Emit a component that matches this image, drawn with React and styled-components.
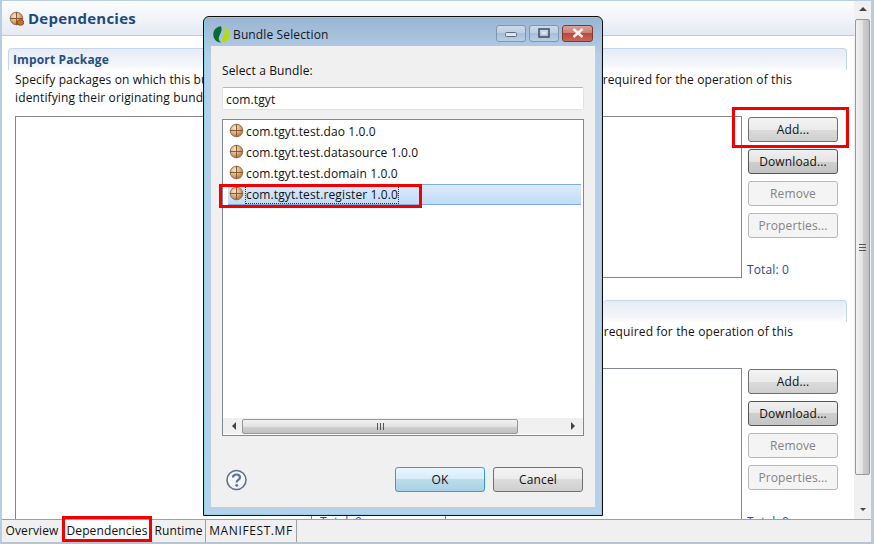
import React from "react";
import styled, { createGlobalStyle } from "styled-components";

const GlobalStyle = createGlobalStyle`
  html, body {
    margin: 0;
    padding: 0;
    background: #fff;
  }
  body {
    font-family: "Open Sans", "Noto Sans", sans-serif;
    font-size: 12px;
    letter-spacing: 0.13px;
    color: #111;
  }
`;

function PackageIcon({ badge }) {
  const id = badge ? "pkgB" : "pkgA";
  return (
    <svg width="15" height="15" viewBox="0 0 15 15" style={{ flex: "none", marginTop: badge ? 0 : -2 }}>
      <defs>
        <radialGradient id={id} cx="0.38" cy="0.32" r="0.75">
          <stop offset="0" stopColor="#f8e6d0" />
          <stop offset="0.55" stopColor="#d9aa7c" />
          <stop offset="1" stopColor="#a06a3a" />
        </radialGradient>
      </defs>
      <circle cx="7.5" cy="7.5" r="6.3" fill={`url(#${id})`} stroke="#96765a" />
      <path d="M7.5 1v13M1 7.5h13" stroke="#8a5a32" strokeWidth="1" />
      {badge && <ellipse cx="11.5" cy="11.5" rx="3.4" ry="2.8" fill="#c8702a" stroke="#7a4218" strokeWidth="0.8" />}
    </svg>
  );
}

function LeafLogo() {
  return (
    <svg width="17" height="17" viewBox="0 0 17 17">
      <path d="M8 .3C3 .8 .3 4.200 .3 8.500s2.700 7.500 7.700 8.200C5.800 14.500 5 12.500 6.300 10 7.800 7 9.500 4 8 .3z" fill="#0b6a32" />
      <path d="M9.500 16.500c4.500-.7 7.200-4 7.200-8S14 1.200 10.200 .5c1.800 2.200 2.600 4.500 1.300 7-1.500 3-3.300 5.500-2 9z" fill="#b4dc0c" />
    </svg>
  );
}

function HelpIcon() {
  return (
    <svg width="21" height="22" viewBox="0 0 21 22">
      <circle cx="10.500" cy="11" r="9.500" fill="#f4f6fa" stroke="#5f7191" strokeWidth="1.600" />
      <path d="M7 8.500c0-2 1.600-3 3.500-3s3.500 1 3.500 2.900c0 2.600-3.300 2.400-3.300 5" fill="none" stroke="#5f7191" strokeWidth="2.200" />
      <circle cx="10.700" cy="16.300" r="1.400" fill="#5f7191" />
    </svg>
  );
}

const Arrow = ({ dir }) => {
  const d = {
    up: "M0 5L4 1L8 5Z",
    down: "M1 2L4 5L7 2Z",
    left: "M5 0L1 4L5 8Z",
    right: "M2 0L6 4L2 8Z",
  }[dir];
  return (
    <svg width="8" height="8" viewBox="0 0 8 8">
      <path d={d} fill="#444" />
    </svg>
  );
};

const Screen = styled.div`
  position: relative;
  width: 875px;
  height: 545px;
  overflow: hidden;
  box-sizing: border-box;
  display: flex;
  flex-direction: column;
  background: #fff;
  padding: 0 1px 1px 0;
`;

const Frame = styled.div`
  flex: 1;
  min-height: 0;
  display: flex;
  flex-direction: column;
  box-sizing: border-box;
  border: solid #b9cde2;
  border-width: 1px 3px 3px 2px;
  border-bottom-color: #b8c4d2;
`;

const Workspace = styled.div`
  height: 518px;
  flex: none;
  display: flex;
`;

const Form = styled.div`
  flex: 1;
  min-width: 0;
  overflow: hidden;
  display: flex;
  flex-direction: column;
`;

const FormHeader = styled.div`
  flex: none;
  height: 34px;
  display: flex;
  align-items: center;
  gap: 4px;
  padding-left: 7px;
  background: linear-gradient(#fdfdfe, #e5eaf3);
  border-bottom: 1px solid #b9cde2;
  h1 {
    margin: 0;
    font-size: 15px;
    font-weight: 700;
    letter-spacing: 0.25px;
    color: #214a7c;
  }
`;

const Section = styled.section`
  flex: none;
  margin: 12px 7px 0 6px;
`;

const SectionHead = styled.div`
  height: 22px;
  box-sizing: border-box;
  padding: 2px 0 0 4px;
  line-height: 18px;
  font-size: 12px;
  font-weight: 700;
  color: #274f80;
  border: 1px solid #c5d6e8;
  border-bottom: 0;
  border-radius: 4px 4px 0 0;
  background: linear-gradient(#e6ebf5, #f4f6fb 80%, #fff);
`;

const Description = styled.div`
  padding: 1px 0 0 7px;
  width: 777px;
  line-height: 18px;
  white-space: nowrap;
`;

const SplitLine = styled.div`
  display: flex;
  justify-content: space-between;
`;

const Columns = styled.div`
  display: flex;
  margin-top: 9px;
  margin-left: 7px;
`;

const LeftTable = styled.div`
  width: 588px;
  height: 420px;
  box-sizing: border-box;
  border-left: 1px solid #828790;
  border-top: 1px solid #828790;
  padding: 396px 0 0 295px;
`;

const HiddenTotalCell = styled.div`
  width: 125px;
  height: 18px;
  padding-left: 8px;
  border-left: 1px solid #828790;
  border-right: 1px solid #828790;
`;

const RightColumn = styled.div`
  width: 244px;
  flex: none;
`;

const TableRow = styled.div`
  display: flex;
  height: 162px;
`;

const TableEnd = styled.div`
  width: 139px;
  flex: none;
  box-sizing: border-box;
  border: solid #828790;
  border-width: 1px 1px ${(p) => (p.$open ? 0 : "1px")} 0;
  height: ${(p) => (p.$open ? "200px" : "162px")};
`;

const ButtonColumn = styled.div`
  width: 90px;
  margin-left: 6px;
  padding-top: 1px;
  display: flex;
  flex-direction: column;
  align-items: flex-end;
  gap: 7px;
`;

const PushButton = styled.div`
  width: 90px;
  height: 25px;
  flex: none;
  box-sizing: border-box;
  border-radius: 3px;
  border: 1px solid ${(p) => (p.$disabled ? "#b5b8ba" : p.$focus ? "#2f9fdc" : p.$strong ? "#555" : "#707070")};
  display: flex;
  align-items: center;
  justify-content: center;
  color: ${(p) => (p.$disabled ? "#838383" : "#111")};
  background: ${(p) =>
    p.$disabled
      ? "#f4f4f4"
      : p.$focus
      ? "linear-gradient(#e9f6fd 0, #d6ecf8 50%, #bcdcec 50%, #a9d0e6 100%)"
      : p.$strong
      ? "linear-gradient(#f0f0f0 0, #e4e4e4 50%, #cfcfcf 50%, #c4c4c4 100%)"
      : "linear-gradient(#f3f3f3 0, #ebebeb 50%, #dcdcdc 50%, #cfcfcf 100%)"};
`;

const TotalLabel = styled.div`
  line-height: 18px;
  color: #2e4a8c;
  white-space: nowrap;
`;

const TotalSlot = styled(TotalLabel)`
  margin-top: auto;
  margin-bottom: -1px;
  align-self: flex-start;
  margin-left: -1px;
`;

const SecondSection = styled.div`
  margin-top: 22px;
`;

const SectionTail = styled(SectionHead)`
  border-left: 0;
  padding: 0;
`;

const TailText = styled.div`
  line-height: 18px;
  height: 36px;
  padding-top: 1px;
  width: 190px;
  white-space: nowrap;
  display: flex;
  justify-content: flex-end;
  margin-bottom: 9px;
`;

const ScrollColumn = styled.div`
  width: 17px;
  flex: none;
  display: flex;
  flex-direction: column;
  background: #f0f0f0;
  box-sizing: border-box;
`;

const ScrollArrow = styled.div`
  height: 18px;
  display: flex;
  align-items: center;
  justify-content: center;
  flex: none;
`;

const VThumb = styled.div`
  height: 456px;
  flex: none;
  margin: 0 1px;
  box-sizing: border-box;
  border: 1px solid #979797;
  border-radius: 2px;
  background: linear-gradient(90deg, #f2f2f2, #e2e2e2 50%, #cfcfcf 55%, #c0c0c0);
  display: flex;
  align-items: center;
  justify-content: center;
  span {
    width: 7px;
    height: 7px;
    background: repeating-linear-gradient(#555 0 1px, transparent 1px 3px);
  }
`;

const ScrollGap = styled.div`
  flex: 1;
`;

const TabBar = styled.div`
  flex: none;
  height: 23px;
  box-sizing: border-box;
  display: flex;
  background: #f0f0f0;
  border-top: 1px solid #a0a0a0;
`;

const Tab = styled.div`
  width: ${(p) => p.$w}px;
  box-sizing: border-box;
  flex: none;
  display: flex;
  align-items: center;
  justify-content: center;
  padding-bottom: 2px;
  letter-spacing: ${(p) => p.$track || 0.13}px;
  border-right: ${(p) => (p.$edge ? "1px solid #a0a0a0" : "0")};
  background: ${(p) => (p.$active ? "linear-gradient(#fff, #f4f4f4)" : "transparent")};
`;

const Dialog = styled.div`
  position: absolute;
  left: 203px;
  top: 16px;
  width: 400px;
  height: 500px;
  box-sizing: border-box;
  border: 1px solid #0c0c0c;
  border-radius: 6px 6px 0 0;
  box-shadow: inset 0 0 0 1px #8fd0ea;
  background: linear-gradient(#9ab5d2 0, #b6cfe8 40px, #b7d1ea 100%);
  padding: 0 7px 8px;
  display: flex;
  flex-direction: column;
`;

const TitleBar = styled.div`
  height: 29px;
  flex: none;
  display: flex;
  align-items: center;
  gap: 3px;
  padding: 6px 0 0 2px;
  box-sizing: border-box;
`;

const TitleText = styled.div`
  flex: 1;
  color: #101820;
`;

const WindowButtons = styled.div`
  display: flex;
  gap: 3px;
  margin: -3px 2px 0 0;
`;

const WindowButton = styled.div`
  width: ${(p) => (p.$close ? 31 : 30)}px;
  height: 17px;
  box-sizing: border-box;
  border-radius: 3px;
  display: flex;
  align-items: center;
  justify-content: center;
  border: 1px solid ${(p) => (p.$close ? "#7d3a35" : "#8096b0")};
  background: ${(p) =>
    p.$close
      ? "linear-gradient(#d8a196, #cf8072 45%, #b9493a 50%, #c8685a)"
      : "linear-gradient(#cbdaea, #bccfe3 45%, #a8bfd8 50%, #b8cee5)"};
`;

const Client = styled.div`
  flex: 1;
  min-height: 0;
  background: #f0f0f0;
  padding: 16px 11px 0;
  display: flex;
  flex-direction: column;
`;

const FieldLabel = styled.div`
  line-height: 18px;
  flex: none;
`;

const FilterInput = styled.div`
  margin-top: 7px;
  height: 23px;
  flex: none;
  box-sizing: border-box;
  border: 1px solid #e3e3e3;
  border-top-color: #b5b5b5;
  border-radius: 2px;
  background: #fff;
  padding-left: 3px;
  line-height: 23px;
`;

const BundleList = styled.div`
  margin-top: 9px;
  height: 317px;
  flex: none;
  box-sizing: border-box;
  border: 1px solid #828790;
  background: #fff;
  padding-top: 1px;
  display: flex;
  flex-direction: column;
`;

const BundleRow = styled.div`
  height: 21px;
  flex: none;
  margin: 0 2px 0 5px;
  padding-left: 1px;
  box-sizing: border-box;
  display: flex;
  align-items: center;
  gap: 1px;
  border: 1px solid ${(p) => (p.$selected ? "#84acdd" : "transparent")};
  border-width: 1px 0;
  background: ${(p) => (p.$selected ? "linear-gradient(#dceafb, #c1dbf8)" : "transparent")};
`;

const RowText = styled.span`
  border: 1px dotted ${(p) => (p.$selected ? "#333" : "transparent")};
  line-height: 17px;
  white-space: nowrap;
`;

const HScroll = styled.div`
  margin-top: auto;
  margin-bottom: 1px;
  height: 16px;
  flex: none;
  background: #f0f0f0;
  display: flex;
  align-items: center;
  padding-left: 4px;
`;

const HArrow = styled.div`
  width: 15px;
  display: flex;
  justify-content: center;
  flex: none;
`;

const HThumb = styled.div`
  width: 276px;
  height: 15px;
  box-sizing: border-box;
  flex: none;
  margin-right: 47px;
  border: 1px solid #979797;
  border-radius: 2px;
  background: linear-gradient(#f2f2f2, #e2e2e2 50%, #cfcfcf 55%, #c0c0c0);
  display: flex;
  align-items: center;
  justify-content: center;
  span {
    width: 7px;
    height: 7px;
    background: repeating-linear-gradient(90deg, #555 0 1px, transparent 1px 3px);
  }
`;

const DialogFooter = styled.div`
  margin-top: 31px;
  flex: none;
  display: flex;
  align-items: center;
  gap: 8px;
  padding: 0 1px 0 4px;
`;

const FooterSpace = styled.div`
  flex: 1;
`;

const RedMark = styled.div`
  position: absolute;
  left: ${(p) => p.$x}px;
  top: ${(p) => p.$y}px;
  width: ${(p) => p.$w}px;
  height: ${(p) => p.$h}px;
  box-sizing: border-box;
  border: 3px solid #f00000;
`;

function ButtonStack() {
  return (
    <ButtonColumn>
      <PushButton>Add...</PushButton>
      <PushButton $strong>Download...</PushButton>
      <PushButton $disabled>Remove</PushButton>
      <PushButton $disabled>Properties...</PushButton>
      <TotalSlot>Total: 0</TotalSlot>
    </ButtonColumn>
  );
}

const bundles = ["com.tgyt.test.dao 1.0.0", "com.tgyt.test.datasource 1.0.0", "com.tgyt.test.domain 1.0.0", "com.tgyt.test.register 1.0.0"];

export default function App() {
  return (
    <>
      <GlobalStyle />
      <Screen>
        <Frame>
          <Workspace>
            <Form>
              <FormHeader>
                <PackageIcon badge />
                <h1>Dependencies</h1>
              </FormHeader>
              <Section>
                <SectionHead>Import Package</SectionHead>
                <Description>
                  <SplitLine>
                    <span>Specify packages on which this bundle depends</span>
                    <span>required for the operation of this</span>
                  </SplitLine>
                  <div>identifying their originating bundle.</div>
                </Description>
                <Columns>
                  <LeftTable>
                    <HiddenTotalCell>
                      <TotalLabel>Total: 0</TotalLabel>
                    </HiddenTotalCell>
                  </LeftTable>
                  <RightColumn>
                    <TableRow>
                      <TableEnd />
                      <ButtonStack />
                    </TableRow>
                    <SecondSection>
                      <SectionTail />
                      <TailText>required for the operation of this</TailText>
                    </SecondSection>
                    <TableRow>
                      <TableEnd $open />
                      <ButtonStack />
                    </TableRow>
                  </RightColumn>
                </Columns>
              </Section>
            </Form>
            <ScrollColumn>
              <ScrollArrow>
                <Arrow dir="up" />
              </ScrollArrow>
              <VThumb>
                <span />
              </VThumb>
              <ScrollGap />
              <ScrollArrow>
                <Arrow dir="down" />
              </ScrollArrow>
            </ScrollColumn>
          </Workspace>
          <TabBar>
            <Tab $w={60}>Overview</Tab>
            <Tab $w={90} $active>Dependencies</Tab>
            <Tab $w={54} $edge>Runtime</Tab>
            <Tab $w={91} $edge $track={0.6}>MANIFEST.MF</Tab>
          </TabBar>
        </Frame>

        <Dialog>
          <TitleBar>
            <LeafLogo />
            <TitleText>Bundle Selection</TitleText>
            <WindowButtons>
              <WindowButton>
                <svg width="12" height="8" viewBox="0 0 12 8">
                  <rect x="0.500" y="3.500" width="11" height="4" rx="1" fill="#dfe6ee" stroke="#5a6c84" />
                </svg>
              </WindowButton>
              <WindowButton>
                <svg width="12" height="10" viewBox="0 0 12 10">
                  <rect x="1" y="1" width="10" height="8" fill="none" stroke="#3c4d63" strokeWidth="1.500" />
                  <rect x="3.500" y="3.500" width="5" height="3" fill="#dfe6ee" />
                </svg>
              </WindowButton>
              <WindowButton $close>
                <svg width="14" height="10" viewBox="0 0 14 10">
                  <path d="M2.500 1l9 8M11.500 1l-9 8" stroke="#f8f0ee" strokeWidth="2.600" />
                </svg>
              </WindowButton>
            </WindowButtons>
          </TitleBar>
          <Client>
            <FieldLabel>Select a Bundle:</FieldLabel>
            <FilterInput>com.tgyt</FilterInput>
            <BundleList>
              {bundles.map((name, i) => (
                <BundleRow key={name} $selected={i === 3}>
                  <PackageIcon />
                  <RowText $selected={i === 3}>{name}</RowText>
                </BundleRow>
              ))}
              <HScroll>
                <HArrow>
                  <Arrow dir="left" />
                </HArrow>
                <HThumb>
                  <span />
                </HThumb>
                <HArrow>
                  <Arrow dir="right" />
                </HArrow>
              </HScroll>
            </BundleList>
            <DialogFooter>
              <HelpIcon />
              <FooterSpace />
              <PushButton $focus>OK</PushButton>
              <PushButton>Cancel</PushButton>
            </DialogFooter>
          </Client>
        </Dialog>

        <RedMark $x={732} $y={107} $w={117} $h={41} />
        <RedMark $x={219} $y={184} $w={203} $h={24} />
        <RedMark $x={62} $y={516} $w={90} $h={26} />
      </Screen>
    </>
  );
}
